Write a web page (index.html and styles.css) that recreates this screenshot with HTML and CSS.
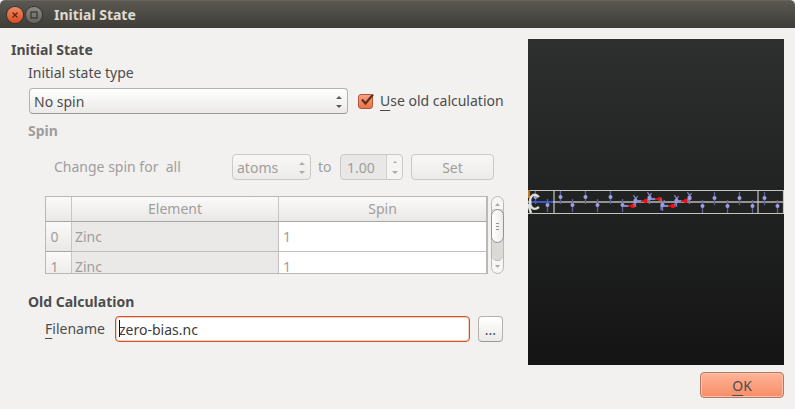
FILE: index.html
```html
<!DOCTYPE html>
<html lang="en">
<head>
    <meta charset="UTF-8">
    <meta name="viewport" content="width=device-width, initial-scale=1.0">
    <title>Initial State</title>
    <link rel="stylesheet" href="styles.css">
</head>
<body>
    <header class="titlebar">
        <button class="win-btn close" aria-label="Close">
            <svg width="16" height="16" viewBox="0 0 16 16"><path d="M5.5 5.5l5 5M10.5 5.5l-5 5" stroke="#5a2a18" stroke-width="1.3"/></svg>
        </button>
        <button class="win-btn maximize" aria-label="Maximize">
            <svg width="16" height="16" viewBox="0 0 16 16"><rect x="5" y="5" width="6" height="6" fill="none" stroke="#35342f" stroke-width="1.2"/></svg>
        </button>
        <h1>Initial State</h1>
    </header>

    <main class="dialog">
        <form class="settings">
            <h2>Initial State</h2>
            <div class="group">
                <label class="type-label" for="stateType">Initial state type</label>
                <div class="row">
                    <div class="select-box state-type">
                        <select id="stateType">
                            <option>No spin</option>
                        </select>
                        <svg class="arrows" width="8" height="14" viewBox="0 0 8 14"><path d="M1 4l3-3 3 3zM1 10l3 3 3-3z"/></svg>
                    </div>
                    <label class="check">
                        <input type="checkbox" checked>
                        <svg class="tick" width="18" height="16" viewBox="0 0 18 16"><path d="M4 7.500l3.500 4L15 2.500" fill="none" stroke="#5c3020" stroke-width="2.200"/></svg>
                        <span><u>U</u>se old calculation</span>
                    </label>
                </div>

                <h3 class="disabled">Spin</h3>
                <div class="row spin-row disabled">
                    <label class="spin-label" for="atoms">Change spin for&nbsp; all</label>
                    <div class="select-box atoms">
                        <select id="atoms" disabled>
                            <option>atoms</option>
                        </select>
                        <svg class="arrows" width="8" height="14" viewBox="0 0 8 14"><path d="M1 4l3-3 3 3zM1 10l3 3 3-3z"/></svg>
                    </div>
                    <label class="to" for="spinValue">to</label>
                    <div class="spinner">
                        <input type="text" id="spinValue" value="1.00" disabled>
                        <svg class="arrows" width="8" height="16" viewBox="0 0 8 16"><path d="M2 4l2-2 2 2zM1 12l3 3 3-3z"/></svg>
                    </div>
                    <button type="button" class="btn set" disabled>Set</button>
                </div>

                <div class="table-area">
                    <div class="table-box">
                        <table>
                            <thead>
                                <tr><th class="num"></th><th>Element</th><th>Spin</th></tr>
                            </thead>
                            <tbody>
                                <tr><th class="num">0</th><td class="locked">Zinc</td><td>1</td></tr>
                                <tr><th class="num">1</th><td class="locked">Zinc</td><td>1</td></tr>
                            </tbody>
                        </table>
                    </div>
                    <div class="scrollbar">
                        <svg width="11" height="12" viewBox="0 0 11 12"><path d="M3 9l2.500-3L8 9z"/></svg>
                        <div class="track"><div class="thumb"><i></i><i></i><i></i></div></div>
                        <svg width="11" height="12" viewBox="0 0 11 12"><path d="M3 4l2.500 3L8 4z"/></svg>
                    </div>
                </div>

                <h3 class="old">Old Calculation</h3>
                <div class="row file-row">
                    <label for="filename"><u>F</u>ilename</label>
                    <div class="file-box">
                        <input type="text" id="filename" value="zero-bias.nc">
                        <span class="caret"></span>
                    </div>
                    <button type="button" class="btn browse">...</button>
                </div>
            </div>
        </form>

        <section class="side">
            <div class="viewer">
                <svg width="256" height="26" viewBox="0 0 256 26">
                    <defs>
                        <g id="atom">
                            <path d="M.5-6V7" stroke="#5d6198" stroke-width="1.300"/>
                            <circle cx=".5" r="2" fill="#9d9fe0"/>
                        </g>
                        <g id="bond">
                            <path d="M-1.500-6l2 4M2.500-5l-2 4M.5-4V6M-1 1v4" fill="none" stroke="#7a7eb8" stroke-width="1.300"/>
                            <circle cx=".5" r="2.200" fill="#9d9fe0"/>
                        </g>
                        <g id="red">
                            <path d="M-10 0h6" stroke="#8d90d8" stroke-width="1.800"/>
                            <path d="M-5 0h4" stroke="#e01010" stroke-width="1.800"/>
                            <circle r="2.300" fill="#f01010"/>
                        </g>
                    </defs>
                    <path d="M0 13h255" stroke="#92928f" stroke-width="2"/>
                    <path d="M0 1.500h255.500v23H0M26 1v24M230 1v24" fill="none" stroke="#c3c5c1" stroke-width="1.200"/>
                    <path d="M4 13h21" stroke="#3558cc" stroke-width="2"/>
                    <path d="M1 1v8" stroke="#c87818" stroke-width="2"/>
                    <use href="#atom" x="7" y="8"/>
                    <use href="#atom" x="19" y="16"/>
                    <use href="#atom" x="32" y="8"/>
                    <use href="#atom" x="44" y="16"/>
                    <use href="#atom" x="57" y="8"/>
                    <use href="#atom" x="69" y="16"/>
                    <use href="#atom" x="82" y="8"/>
                    <use href="#atom" x="94" y="16"/>
                    <use href="#red" x="105" y="17"/>
                    <use href="#bond" x="107" y="12"/>
                    <use href="#red" x="118" y="12"/>
                    <use href="#bond" x="121" y="9"/>
                    <use href="#red" x="132" y="10"/>
                    <use href="#bond" x="134" y="16"/>
                    <use href="#red" x="145" y="17"/>
                    <use href="#bond" x="148" y="12"/>
                    <use href="#red" x="158" y="12"/>
                    <use href="#bond" x="161" y="9"/>
                    <use href="#atom" x="174" y="17"/>
                    <use href="#atom" x="186" y="9"/>
                    <use href="#atom" x="199" y="17"/>
                    <use href="#atom" x="211" y="9"/>
                    <use href="#atom" x="224" y="17"/>
                    <use href="#atom" x="236" y="9"/>
                    <use href="#atom" x="249" y="17"/>
                    <path d="M11 8C6 3 2 7 2 13c0 6 4 9 9 5M0 15l3 9" fill="none" stroke="#deded9" stroke-width="2.400"/>
                </svg>
            </div>
            <button class="btn ok"><u>O</u>K</button>
        </section>
    </main>
</body>
</html>
```

FILE: styles.css
```css
* {
    box-sizing: border-box;
}
body {
    margin: 0;
    min-height: 100vh;
    background-color: #f2f1f0;
    color: #4c4c4c;
    font-family: "Noto Sans", sans-serif;
    font-size: 14px;
    line-height: 22px;
}
h1, h2, h3 {
    margin: 0;
    font-size: 14px;
    line-height: 22px;
    font-weight: bold;
}
u {
    text-decoration: underline;
    text-underline-offset: 4px;
}
input, select, button {
    font-family: inherit;
    font-size: inherit;
    color: inherit;
    margin: 0;
}
.titlebar {
    display: flex;
    align-items: center;
    height: 28px;
    padding: 0 7px;
    background: linear-gradient(#5b5852, #3d3c37);
    border-top: 1px solid #68655e;
    border-radius: 5px 5px 0 0;
}
.titlebar h1 {
    margin-left: 9px;
    color: #dfdbd2;
}
.win-btn {
    width: 16px;
    height: 16px;
    padding: 0;
    margin-right: 3px;
    border: 0;
    border-radius: 50%;
    box-shadow: 0 0 0 1px #35342f;
}
.win-btn svg {
    display: block;
}
.close {
    background: linear-gradient(#f58a63, #dd4c1c);
}
.maximize {
    background: linear-gradient(#8b8982, #65635c);
}
.dialog {
    display: flex;
    gap: 20px;
    padding: 11px;
}
.settings {
    flex: 1;
}
.group {
    padding-left: 17px;
}
.type-label {
    display: block;
    height: 27px;
    line-height: 24px;
}
.row {
    display: flex;
    align-items: center;
    height: 26px;
}
.disabled {
    color: #a09e9c;
}
h3.disabled {
    margin-top: 6px;
}
.select-box, .spinner, .file-box {
    position: relative;
}
.select-box select {
    display: block;
    appearance: none;
    width: 100%;
    height: 26px;
    padding: 0 4px;
    border: 1px solid #b5b2ae;
    border-bottom-color: #9d9a96;
    border-radius: 4px;
    background: linear-gradient(#ffffff, #ebeae8);
}
.select-box select:disabled {
    opacity: 1;
    color: #a09e9c;
    border-color: #cbc9c6;
    background: linear-gradient(#f8f7f6, #ecebe9);
}
.arrows {
    position: absolute;
    right: 5px;
    top: 7px;
    fill: #5a5a5a;
    pointer-events: none;
}
.disabled .arrows {
    fill: #adaba8;
}
.state-type {
    flex: 1;
    margin-left: 1px;
}
.check {
    position: relative;
    display: flex;
    align-items: center;
    gap: 7px;
    width: 150px;
    margin-left: 10px;
    white-space: nowrap;
}
.check input {
    appearance: none;
    width: 15px;
    height: 15px;
    border: 1px solid #b0583a;
    border-radius: 3px;
    background: linear-gradient(#f9a283, #ee7145);
}
.tick {
    position: absolute;
    left: 0;
    top: 2px;
}
.spin-row {
    margin-top: 12px;
    padding-left: 26px;
}
.spin-label {
    width: 178px;
}
.atoms {
    width: 79px;
}
.to {
    width: 29px;
    padding-left: 7px;
}
.spinner {
    width: 63px;
}
.spinner input {
    display: block;
    width: 100%;
    height: 26px;
    padding: 0 6px;
    border: 1px solid #cbc9c6;
    border-radius: 4px;
    color: #a09e9c;
    background: linear-gradient(to right, #e9e8e6 45px, #d3d1ce 45px, #d3d1ce 46px, #f5f4f3 46px);
}
.spinner .arrows {
    right: 4px;
    top: 5px;
}
.btn {
    height: 26px;
    padding: 0;
    border: 1px solid #b5b2ae;
    border-bottom-color: #9d9a96;
    border-radius: 4px;
    background: linear-gradient(#ffffff, #ebeae8);
}
.set {
    width: 83px;
    margin-left: 8px;
    color: #a09e9c;
    border-color: #cbc9c6;
    background: linear-gradient(#f8f7f6, #ecebe9);
}
.table-area {
    display: flex;
    gap: 3px;
    height: 78px;
    margin-top: 16px;
    padding: 0 4px 0 17px;
}
.table-box {
    flex: 1;
    overflow: hidden;
    border: 1px solid #bbb8b4;
    border-right-width: 2px;
    background-color: #fff;
}
table {
    width: 100%;
    table-layout: fixed;
    border-collapse: separate;
    border-spacing: 0;
    color: #a09e9c;
}
th {
    height: 25px;
    padding: 0;
    font-weight: normal;
    text-align: center;
    border-right: 1px solid #c8c6c2;
    border-bottom: 1px solid #a9a6a2;
    background: linear-gradient(#fbfafa, #e9e8e6);
}
.num {
    width: 26px;
    padding-right: 8px;
}
td {
    height: 30px;
    padding: 0 4px;
    border-right: 1px solid #c0beba;
    border-bottom: 1px solid #c0beba;
}
th:last-child, td:last-child {
    border-right: 0;
}
.locked {
    padding: 0 3px;
    background-color: #eae9e7;
}
.scrollbar {
    display: flex;
    flex-direction: column;
    width: 13px;
    border: 1px solid #bbb8b4;
    border-radius: 7px;
    background-color: #f7f6f5;
}
.scrollbar svg {
    display: block;
    fill: #adaba8;
}
.track {
    flex: 1;
    border-radius: 0 0 6px 6px;
    background-color: #dcdad7;
    border-bottom: 1px solid #bbb8b4;
}
.thumb {
    display: flex;
    flex-direction: column;
    align-items: center;
    justify-content: center;
    gap: 2px;
    height: 34px;
    margin: 0 -1px;
    border: 1px solid #96938f;
    border-radius: 7px;
    background: linear-gradient(to right, #ffffff, #ecebe9);
}
.thumb i {
    width: 3px;
    height: 1px;
    background-color: #96938f;
}
.old {
    margin-top: 17px;
}
.file-row {
    margin-top: 3px;
    padding: 0 5px 0 17px;
}
.file-row label {
    width: 70px;
}
.file-box {
    flex: 1;
}
.file-box input {
    display: block;
    width: 100%;
    height: 26px;
    padding: 0 3px;
    border: 1px solid #cf5326;
    border-radius: 4px;
    box-shadow: inset 0 0 0 1px #f8cdbd;
    background-color: #fff;
    color: #3c3c3c;
    outline: none;
}
.caret {
    position: absolute;
    left: 4px;
    top: 4px;
    width: 1px;
    height: 17px;
    background-color: #111;
}
.browse {
    width: 25px;
    margin-left: 8px;
}
.side {
    display: flex;
    flex-direction: column;
    align-items: flex-end;
    gap: 7px;
    width: 256px;
}
.viewer {
    width: 100%;
    height: 326px;
    padding-top: 150px;
    background: linear-gradient(#2d302f, #141414);
}
.viewer svg {
    display: block;
}
.ok {
    width: 84px;
    border-color: #b17a65;
    background: linear-gradient(#ffb498, #f68d66);
    box-shadow: inset 0 0 0 1px #fcc0a8;
}
```
